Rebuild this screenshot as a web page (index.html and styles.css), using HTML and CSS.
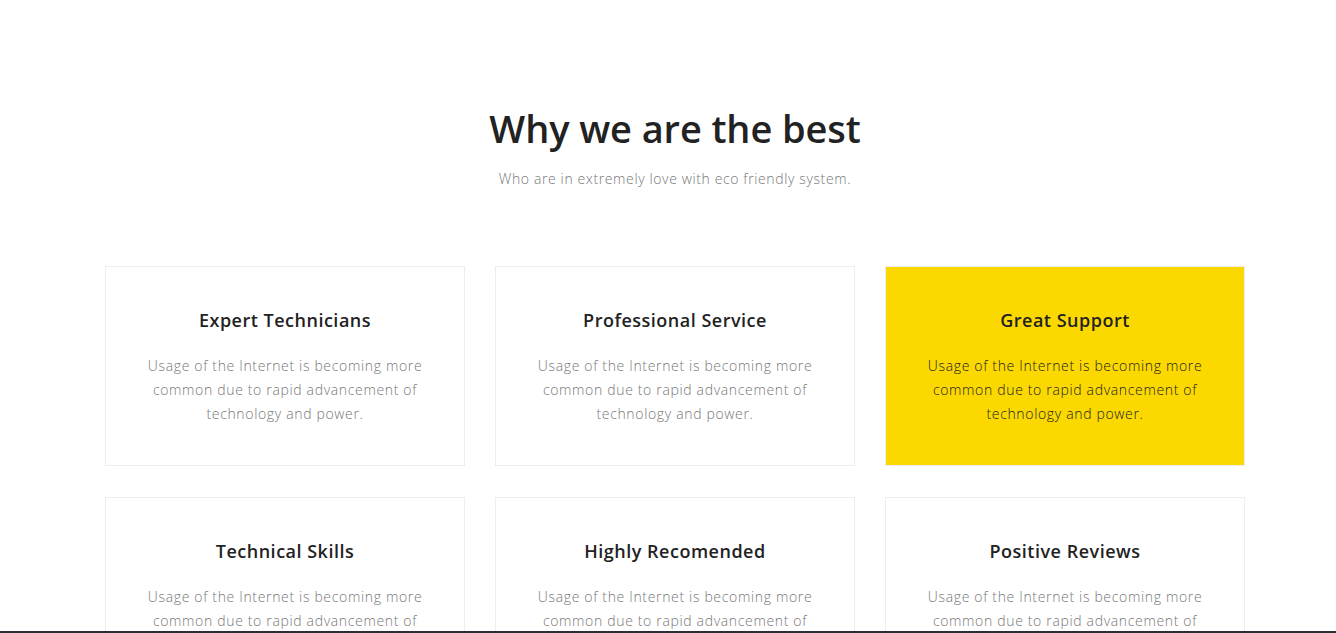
FILE: index.html
```html
<!DOCTYPE html>
<html lang="en">
<head>
<meta charset="utf-8">
<title>Why we are the best</title>
<link rel="stylesheet" href="styles.css">
</head>
<body>
<section class="features">
  <div class="container">
    <div class="section-head">
      <h1 class="section-title">Why we are the best</h1>
      <p class="section-sub">Who are in extremely love with eco friendly system.</p>
    </div>
    <div class="grid">
      <div class="card">
        <h4 class="card-title">Expert Technicians</h4>
        <p class="card-text">Usage of the Internet is becoming more<br>common due to rapid advancement of<br>technology and power.</p>
      </div>
      <div class="card">
        <h4 class="card-title">Professional Service</h4>
        <p class="card-text">Usage of the Internet is becoming more<br>common due to rapid advancement of<br>technology and power.</p>
      </div>
      <div class="card card-active">
        <h4 class="card-title">Great Support</h4>
        <p class="card-text">Usage of the Internet is becoming more<br>common due to rapid advancement of<br>technology and power.</p>
      </div>
      <div class="card">
        <h4 class="card-title">Technical Skills</h4>
        <p class="card-text">Usage of the Internet is becoming more<br>common due to rapid advancement of<br>technology and power.</p>
      </div>
      <div class="card">
        <h4 class="card-title">Highly Recomended</h4>
        <p class="card-text">Usage of the Internet is becoming more<br>common due to rapid advancement of<br>technology and power.</p>
      </div>
      <div class="card">
        <h4 class="card-title">Positive Reviews</h4>
        <p class="card-text">Usage of the Internet is becoming more<br>common due to rapid advancement of<br>technology and power.</p>
      </div>
    </div>
  </div>
</section>
<footer class="footer"></footer>
</body>
</html>
```

FILE: styles.css
```css
html, body {
  margin: 0;
  padding: 0;
  background: #ffffff;
}
body {
  font-family: "Open Sans", "Liberation Sans", sans-serif;
  color: #777777;
}
.features {
  box-sizing: border-box;
  height: 631px;
  padding: 106px 0 0 14px;
  overflow: hidden;
}
.container {
  width: 1140px;
  margin: 0 auto;
}
.section-head {
  text-align: center;
  margin-bottom: 75px;
}
.section-title {
  margin: 0;
  font-size: 38px;
  line-height: 44px;
  font-weight: 600;
  color: #222222;
  letter-spacing: -0.1px;
}
.section-sub {
  margin: 17px 0 0;
  font-size: 14px;
  line-height: 24px;
  font-weight: 300;
  color: #777777;
  letter-spacing: 0.62px;
}
.grid {
  display: grid;
  grid-template-columns: repeat(3, 360px);
  column-gap: 30px;
  row-gap: 31px;
}
.card {
  box-sizing: border-box;
  height: 200px;
  border: 1px solid #eeeeee;
  padding: 39px 20px 0;
  text-align: center;
  background: #ffffff;
}
.card-title {
  margin: 0;
  font-size: 18px;
  line-height: 28px;
  font-weight: 600;
  color: #222222;
  letter-spacing: 0.5px;
}
.card-text {
  margin: 20px 0 0;
  font-size: 14px;
  line-height: 24px;
  font-weight: 300;
  color: #777777;
  letter-spacing: 0.66px;
}
.card-active {
  background: #fbd900;
}
.card-active .card-text {
  color: #222222;
}
.footer {
  height: 2px;
  background: #2a3038;
}
```
